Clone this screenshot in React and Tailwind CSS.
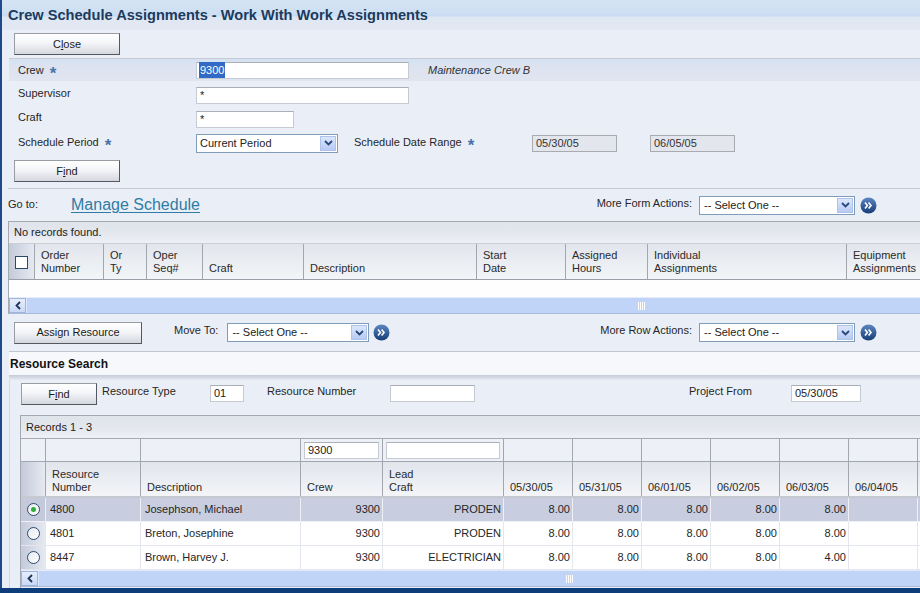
import React from "react";

const Chevron = () => (
  <svg width="9" height="6" viewBox="0 0 9 6">
    <path d="M1 1l3.5 3.5L8 1" stroke="#27487a" strokeWidth="1.8" fill="none" />
  </svg>
);

function Select({ className }) {
  return (
    <div className={`flex items-center h-[19px] border border-[#7f9db9] bg-white ${className}`}>
      <span className="flex-1 pl-[4px] text-[11px] text-[#222] whitespace-nowrap overflow-hidden">-- Select One --</span>
      <span className="w-[16px] h-[15px] mr-[1px] flex items-center justify-center bg-gradient-to-b from-[#dde7fb] to-[#b7caf3] border border-[#aec2ee]">
        <Chevron />
      </span>
    </div>
  );
}

function Go() {
  return (
    <svg width="17" height="17" viewBox="0 0 17 17">
      <defs>
        <linearGradient id="gog" x1="0" y1="0" x2="0" y2="1">
          <stop offset="0" stopColor="#5b87c2" />
          <stop offset="1" stopColor="#163d76" />
        </linearGradient>
      </defs>
      <circle cx="8.5" cy="8.5" r="8" fill="url(#gog)" />
      <path d="M5 5.6l2.4 2.9L5 11.4M8.6 5.6l2.4 2.9-2.4 2.9" stroke="#fff" strokeWidth="1.6" fill="none" />
    </svg>
  );
}

function Btn({ children, className }) {
  return (
    <div
      className={`h-[22px] flex items-center justify-center border border-[#9a9ca4] border-r-[#55585f] border-b-[#55585f] bg-[linear-gradient(to_bottom,#ffffff,#f4f5f8_45%,#d5d7df)] text-[11px] text-[#1a1a1a] ${className}`}
    >
      {children}
    </div>
  );
}

function Input({ className, children, disabled }) {
  return (
    <div
      className={`h-[17px] flex items-center px-[3px] border text-[11px] ${
        disabled ? "bg-[#e3e6ec] border-[#a9abb0] text-[#333]" : "bg-white border-[#c6cad2] border-t-[#abafb8] text-[#222]"
      } ${className}`}
    >
      {children}
    </div>
  );
}

function Star() {
  return <span className="text-[#4a72a8] text-[17px] leading-[11px] ml-[6px] relative top-[3px] font-bold">*</span>;
}

function Grip() {
  return (
    <div className="flex gap-[1px] h-[8px]">
      <div className="w-[1px] bg-white" />
      <div className="w-[1px] bg-white" />
      <div className="w-[1px] bg-white" />
      <div className="w-[1px] bg-white" />
    </div>
  );
}

function HScroll({ spacer }) {
  return (
    <div className="h-[17px] flex bg-[#c0d4f8] border-t border-[#e4ecfb] border-b border-b-[#a9b9d6]">
      <div className="w-[17px] h-[15px] flex items-center justify-center border border-[#9fb5dd] bg-gradient-to-b from-[#e6eefc] to-[#c9d9f6]">
        <svg width="6" height="9" viewBox="0 0 6 9">
          <path d="M5 1L1.5 4.5 5 8" stroke="#1f3553" strokeWidth="1.8" fill="none" />
        </svg>
      </div>
      <div className="flex-1 flex items-center border-l border-[#dfe8fb]">
        <div className={spacer} />
        <Grip />
      </div>
    </div>
  );
}

const hdrBg = "bg-[linear-gradient(to_bottom,#e2e5ec,#e8ebf0_40%,#f3f5f8)]";
const sideBg = "bg-[linear-gradient(to_right,#c3cada,#e6e9f1)]";

const g1Cols = [
  { w: "w-[69px]", t: ["Order", "Number"] },
  { w: "w-[43px]", t: ["Or", "Ty"] },
  { w: "w-[56px]", t: ["Oper", "Seq#"] },
  { w: "w-[101px]", t: ["Craft"] },
  { w: "w-[173px]", t: ["Description"] },
  { w: "w-[89px]", t: ["Start", "Date"] },
  { w: "w-[82px]", t: ["Assigned", "Hours"] },
  { w: "w-[199px]", t: ["Individual", "Assignments"] },
  { w: "w-[90px]", t: ["Equipment", "Assignments"] },
];

const g2Cols = [
  { w: "w-[95px]", t: ["Resource", "Number"] },
  { w: "w-[160px]", t: ["Description"] },
  { w: "w-[82px]", t: ["Crew"] },
  { w: "w-[121px]", t: ["Lead", "Craft"] },
  { w: "w-[69px]", t: ["05/30/05"] },
  { w: "w-[69px]", t: ["05/31/05"] },
  { w: "w-[69px]", t: ["06/01/05"] },
  { w: "w-[69px]", t: ["06/02/05"] },
  { w: "w-[69px]", t: ["06/03/05"] },
  { w: "w-[69px]", t: ["06/04/05"] },
  { w: "w-[69px]", t: [""] },
];

const rows = [
  { n: "4800", d: "Josephson, Michael", c: "9300", l: "PRODEN", h: ["8.00", "8.00", "8.00", "8.00", "8.00", "", ""], sel: true },
  { n: "4801", d: "Breton, Josephine", c: "9300", l: "PRODEN", h: ["8.00", "8.00", "8.00", "8.00", "8.00", "", ""] },
  { n: "8447", d: "Brown, Harvey J.", c: "9300", l: "ELECTRICIAN", h: ["8.00", "8.00", "8.00", "8.00", "4.00", "", ""] },
];

function Radio({ on }) {
  return (
    <div className="w-[13px] h-[13px] rounded-full border border-[#2d4b70] bg-gradient-to-br from-[#e6e9ee] to-white flex items-center justify-center">
      {on && <div className="w-[5px] h-[5px] rounded-full bg-[#2fae3a]" />}
    </div>
  );
}

function HeaderCell({ w, t, pb }) {
  return (
    <div className={`${w} ${pb} shrink-0 border-l border-[#a2a6ae] pl-[6px] flex flex-col justify-end leading-[13px] text-[#2a2a2a] ${hdrBg}`}>
      {t.map((x, i) => (
        <div key={i} className="whitespace-nowrap">{x}</div>
      ))}
    </div>
  );
}

export default function App() {
  return (
    <div className="w-[920px] h-[593px] overflow-hidden flex flex-col bg-[#0e3d7b] font-['Liberation_Sans',Arial,sans-serif] text-[11px] text-[#262626]">
      <div className="h-[588px] overflow-hidden flex flex-col bg-[#eaeff7] border-l-2 border-[#1c4a8a]">
        {/* Title */}
        <div className="h-[30px] shrink-0 flex items-start pt-[5px] pl-[6px] bg-[linear-gradient(to_bottom,#d5e3f4_0px,#cddff3_14px,#c9dbf1_16px,#dfe7f2_17px,#e3e9f3_30px)]">
          <span className="text-[14.6px] font-bold text-[#1b3b5e]">Crew Schedule Assignments - Work With Work Assignments</span>
        </div>
        {/* Close row */}
        <div className="h-[28px] shrink-0 pl-[12px] pt-[3px]">
          <Btn className="w-[106px]">
            <span>
              C<span className="underline">l</span>ose
            </span>
          </Btn>
        </div>
        {/* Form */}
        <div className="ml-[7px] border-t border-[#c5cad6] shrink-0">
          <div className="h-[22px] flex items-center pl-[9px] bg-[linear-gradient(to_bottom,#d3e2f3,#dce2ef_30%,#e0e5f0)]">
            <div className="w-[178px] flex items-center">
              Crew<Star />
            </div>
            <Input className="w-[213px] pl-[3px]">
              <span className="bg-[#3169c6] text-white px-[1px] -ml-[1px]">9300</span>
            </Input>
            <span className="ml-[19px] italic text-[#333]">Maintenance Crew B</span>
          </div>
          <div className="h-[24px] mt-[2px] flex items-center pl-[9px]">
            <div className="w-[178px] -mt-[4px]">Supervisor</div>
            <Input className="w-[213px]">*</Input>
          </div>
          <div className="h-[24px] flex items-center pl-[9px]">
            <div className="w-[178px] -mt-[4px]">Craft</div>
            <Input className="w-[98px]">*</Input>
          </div>
          <div className="h-[24px] flex items-center pl-[9px]">
            <div className="w-[178px] flex items-center -mt-[1px]">
              Schedule Period<Star />
            </div>
            <div className="flex items-center h-[19px] w-[142px] border border-[#7f9db9] bg-white">
              <span className="flex-1 pl-[3px] text-[11px] text-[#222]">Current Period</span>
              <span className="w-[16px] h-[15px] mr-[1px] flex items-center justify-center bg-gradient-to-b from-[#dde7fb] to-[#b7caf3] border border-[#aec2ee]">
                <Chevron />
              </span>
            </div>
            <div className="ml-[16px] w-[178px] flex items-center -mt-[1px]">
              Schedule Date Range<Star />
            </div>
            <Input disabled className="w-[85px]">05/30/05</Input>
            <Input disabled className="w-[85px] ml-[33px]">06/05/05</Input>
          </div>
          <div className="pl-[5px] pt-[5px] pb-[6px]">
            <Btn className="w-[106px]">
              <span>
                F<span className="underline">i</span>nd
              </span>
            </Btn>
          </div>
        </div>
        {/* Go to */}
        <div className="ml-[6px] border-t border-[#c5cad6] h-[33px] shrink-0 flex items-center">
          <span className="w-[63px] -mt-[2px]">Go to:</span>
          <span className="text-[16px] text-[#2f7ca4] underline decoration-1 underline-offset-2 -mt-[1px]">Manage Schedule</span>
          <div className="flex-1" />
          <span className="-mt-[4px]">More Form Actions:</span>
          <Select className="w-[156px] ml-[7px]" />
          <div className="ml-[5px] mr-[43px] flex">
            <Go />
          </div>
        </div>
        {/* Grid 1 */}
        <div className="ml-[6px] shrink-0 border-t border-l border-[#a3a8b1] overflow-hidden">
          <div className="h-[21px] flex items-center pl-[5px] bg-[linear-gradient(to_bottom,#dfe3ea,#e4e7ee_55%,#eef0f5)] text-[#222]">
            No records found.
          </div>
          <div className="h-[37px] flex border-t border-[#c9cdd5] border-b border-b-[#9a9ea6]">
            <div className={`w-[25px] shrink-0 flex items-center justify-center ${sideBg}`}>
              <div className="w-[13px] h-[13px] border-[1.5px] border-[#2c4a6a] bg-white mt-[1px]" />
            </div>
            {g1Cols.map((c, i) => (
              <HeaderCell key={i} {...c} pb="pb-[4px]" />
            ))}
          </div>
          <div className="h-[17px] bg-[#fdfefd]" />
          <HScroll spacer="w-[611px]" />
        </div>
        {/* Toolbar */}
        <div className="h-[37px] shrink-0 flex items-center pl-[12px]">
          <Btn className="w-[128px]">Assign Resource</Btn>
          <span className="ml-[32px] -mt-[4px]">Move To:</span>
          <Select className="w-[142px] ml-[9px]" />
          <div className="ml-[4px] flex">
            <Go />
          </div>
          <div className="flex-1" />
          <span className="-mt-[4px]">More Row Actions:</span>
          <Select className="w-[156px] ml-[7px]" />
          <div className="ml-[5px] mr-[43px] flex">
            <Go />
          </div>
        </div>
        {/* Resource search */}
        <div className="ml-[7px] flex-1 flex flex-col border-t border-[#bfc5d1]">
          <div className="h-[23px] shrink-0 flex items-center pl-[1px] bg-[#f6f8fc] font-bold text-[12px] text-[#111]">
            Resource Search
          </div>
          <div className="h-[5px] shrink-0 bg-[linear-gradient(to_bottom,#c3cad8,#e6eaf2)]" />
          <div className="flex-1 flex flex-col border-l border-[#d3d7df]">
            <div className="h-[35px] shrink-0 flex items-start pt-[3px] pl-[11px]">
              <Btn className="w-[76px]">
                <span>
                  F<span className="underline">i</span>nd
                </span>
              </Btn>
              <span className="ml-[5px] w-[108px]">Resource Type</span>
              <Input className="w-[34px] mt-[2px]">01</Input>
              <span className="ml-[23px] w-[123px]">Resource Number</span>
              <Input className="w-[85px] mt-[2px]" />
              <span className="ml-[214px] w-[102px]">Project From</span>
              <Input className="w-[70px] mt-[2px]">05/30/05</Input>
            </div>
            {/* Grid 2 */}
            <div className="ml-[10px] border-t border-l border-[#a3a8b1] overflow-hidden flex-1">
              <div className="h-[22px] flex items-center pl-[5px] bg-[linear-gradient(to_bottom,#dfe3ea,#e4e7ee_55%,#eef0f5)] text-[#222]">
                Records 1 - 3
              </div>
              <div className="h-[24px] flex border-t border-[#a6aab2] border-b border-b-[#a2a6ae] bg-[#edf0f7]">
                <div className="w-[24px] shrink-0" />
                {g2Cols.map((c, i) => (
                  <div key={i} className={`${c.w} shrink-0 border-l border-[#a2a6ae] flex items-center px-[3px]`}>
                    {i === 2 && <Input className="w-full">9300</Input>}
                    {i === 3 && <Input className="w-full" />}
                  </div>
                ))}
              </div>
              <div className="h-[36px] flex border-b-2 border-[#c5c9d1]">
                <div className={`w-[24px] shrink-0 ${sideBg}`} />
                {g2Cols.map((c, i) => (
                  <HeaderCell key={i} {...c} pb="pb-[2px]" />
                ))}
              </div>
              {rows.map((r, ri) => (
                <div key={ri} className={`h-[24px] flex border-b ${r.sel ? "bg-[#c9cde0] border-[#eef0f5]" : "bg-white border-[#e3e6ec]"}`}>
                  <div className={`w-[24px] shrink-0 flex items-center justify-center ${r.sel ? "bg-[#c4c9dc]" : sideBg}`}>
                    <Radio on={r.sel} />
                  </div>
                  <div className={`w-[95px] shrink-0 border-l ${r.sel ? "border-[#eef0f5]" : "border-[#e3e6ec]"} pl-[4px] flex items-center`}>{r.n}</div>
                  <div className={`w-[160px] shrink-0 border-l ${r.sel ? "border-[#eef0f5]" : "border-[#e3e6ec]"} pl-[4px] flex items-center`}>{r.d}</div>
                  <div className={`w-[82px] shrink-0 border-l ${r.sel ? "border-[#eef0f5]" : "border-[#e3e6ec]"} pr-[2px] flex items-center justify-end`}>{r.c}</div>
                  <div className={`w-[121px] shrink-0 border-l ${r.sel ? "border-[#eef0f5]" : "border-[#e3e6ec]"} pr-[2px] flex items-center justify-end`}>{r.l}</div>
                  {r.h.map((h, hi) => (
                    <div key={hi} className={`w-[69px] shrink-0 border-l ${r.sel ? "border-[#eef0f5]" : "border-[#e3e6ec]"} pr-[2px] flex items-center justify-end`}>
                      {h}
                    </div>
                  ))}
                </div>
              ))}
              <HScroll spacer="w-[527px]" />
            </div>
          </div>
        </div>
      </div>
    </div>
  );
}
